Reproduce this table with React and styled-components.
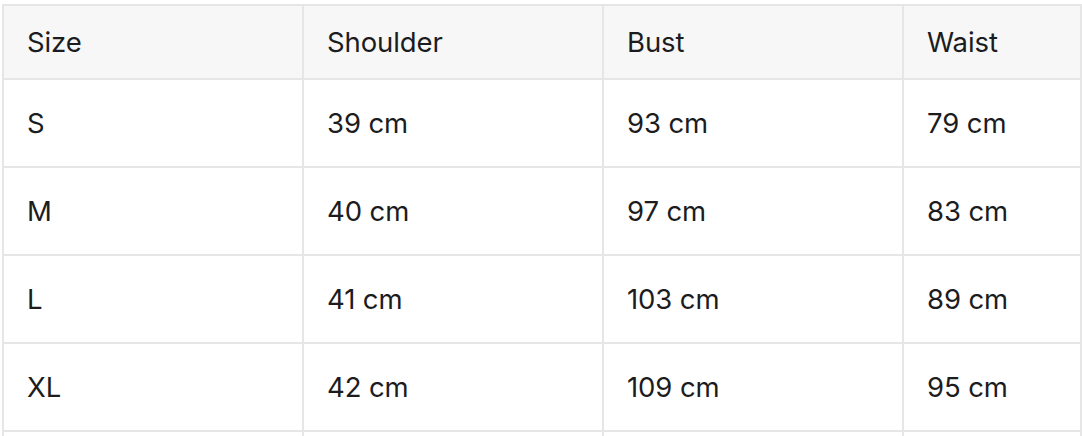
import React from "react";
import styled, { createGlobalStyle } from "styled-components";

const Global = createGlobalStyle`
  html, body { margin: 0; padding: 0; background: #ffffff; overflow: hidden; }
  body { font-family: Inter, "Liberation Sans", sans-serif; }
`;

const Page = styled.div`
  padding: 4px 0 0 2px;
`;

const Table = styled.div`
  width: 1080px;
  box-sizing: border-box;
  display: grid;
  grid-template-columns: 298px 298px 298px 1fr;
  grid-auto-rows: 86px;
  grid-template-rows: 72px;
  gap: 2px;
  padding: 2px;
  background: #e6e6e6;
`;

const Cell = styled.div`
  display: flex;
  align-items: center;
  padding: 0 0 0 23px;
  background: ${(p) => (p.$head ? "#f7f7f7" : "#ffffff")};
  color: #1c1c1e;
  font-size: 27.5px;
  font-weight: 400;
  letter-spacing: -0.1px;
`;

const head = ["Size", "Shoulder", "Bust", "Waist"];
const rows = [
  ["S", "39 cm", "93 cm", "79 cm"],
  ["M", "40 cm", "97 cm", "83 cm"],
  ["L", "41 cm", "103 cm", "89 cm"],
  ["XL", "42 cm", "109 cm", "95 cm"],
  ["", "", "", ""],
];

export default function App() {
  return (
    <>
      <Global />
      <Page>
        <Table>
          {head.map((h) => (
            <Cell key={h} $head>
              {h}
            </Cell>
          ))}
          {rows.map((r, ri) =>
            r.map((v, i) => <Cell key={ri + "-" + i}>{v}</Cell>)
          )}
        </Table>
      </Page>
    </>
  );
}
